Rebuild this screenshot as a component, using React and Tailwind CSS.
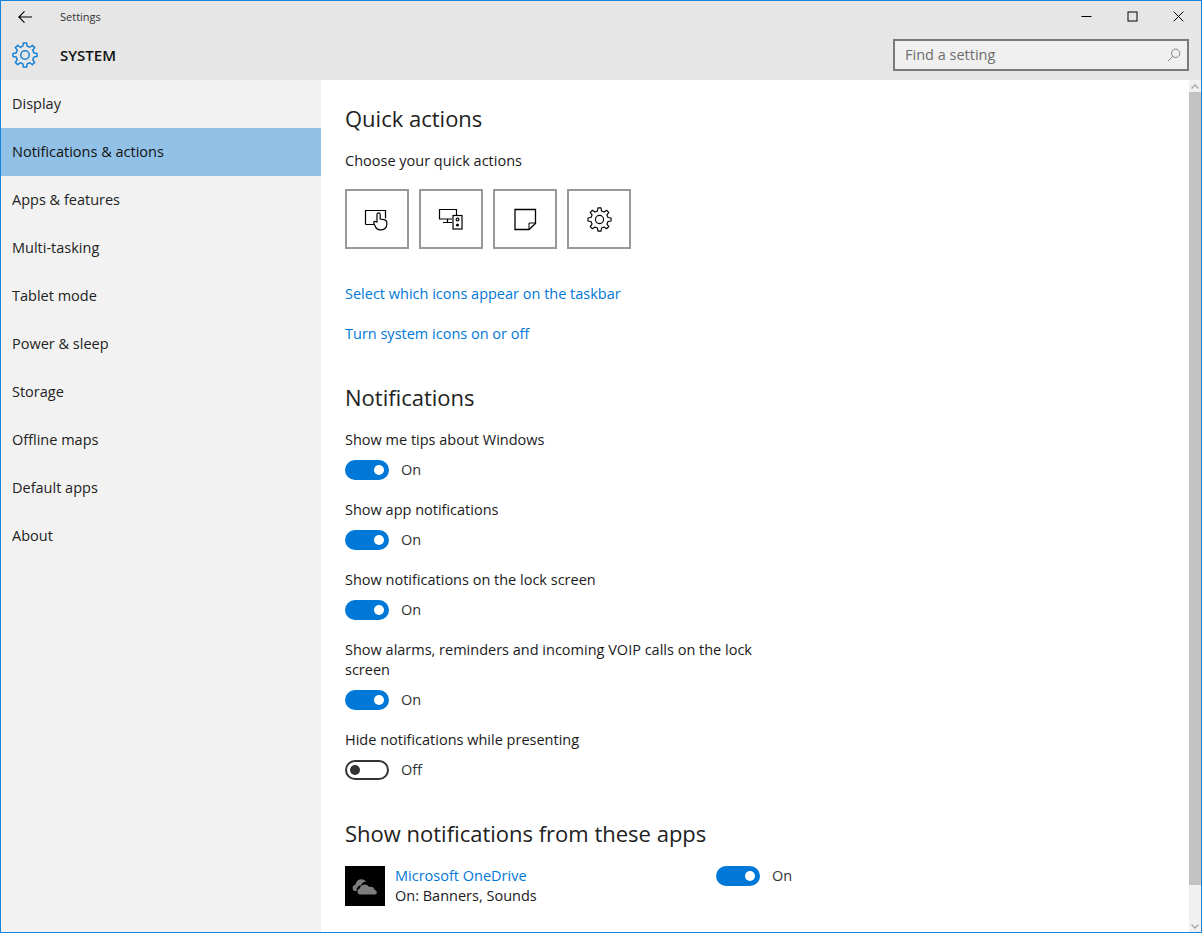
import React from "react";

const gearPath = (teeth, cx, cy, ro, ri) => {
  const pts = [];
  const step = (Math.PI * 2) / teeth;
  for (let i = 0; i < teeth; i++) {
    const a = i * step - Math.PI / 2;
    const p = (r, d) => `${(cx + r * Math.cos(a + d * step)).toFixed(2)} ${(cy + r * Math.sin(a + d * step)).toFixed(2)}`;
    pts.push(p(ro, -0.17), p(ro, 0.17), p(ri, 0.3), p(ri, 0.7));
  }
  return "M" + pts.join("L") + "Z";
};

function Gear({ className, size, strokeWidth = 1.4 }) {
  return (
    <svg width={size} height={size} viewBox="0 0 24 24" className={className} fill="none" stroke="currentColor" strokeWidth={strokeWidth} strokeLinejoin="round">
      <path d={gearPath(8, 12, 12, 11.2, 8.4)} />
      <circle cx="12" cy="12" r="3.9" />
    </svg>
  );
}

function Toggle({ on }) {
  return (
    <div className="flex items-center h-5">
      <div className={on ? "w-11 h-5 rounded-full bg-[#0078d7] flex items-center justify-end pr-[5px]" : "w-11 h-5 rounded-full border-2 border-[#333333] bg-white flex items-center pl-[3px]"}>
        <div className={on ? "w-2.5 h-2.5 rounded-full bg-white" : "w-2.5 h-2.5 rounded-full bg-[#333333]"} />
      </div>
      <span className="ml-3 text-[#333333]">{on ? "On" : "Off"}</span>
    </div>
  );
}

function Setting({ label, on, first }) {
  return (
    <div className={first ? "mt-[18px] w-[412px]" : "mt-5 w-[412px]"}>
      <div className="text-[#1a1a1a]">{label}</div>
      <div className="mt-2.5"><Toggle on={on} /></div>
    </div>
  );
}

function Tile({ children }) {
  return <div className="w-16 h-[60px] border-2 border-[#999999] flex items-center justify-center text-black">{children}</div>;
}

const nav = ["Display", "Notifications & actions", "Apps & features", "Multi-tasking", "Tablet mode", "Power & sleep", "Storage", "Offline maps", "Default apps", "About"];

export default function App() {
  return (
    <div className="w-[1202px] h-[933px] border border-[#1883d7] flex flex-col overflow-hidden bg-white text-[14.5px] leading-5 text-[#1a1a1a]" style={{ fontFamily: '"Open Sans", "Noto Sans", sans-serif' }}>
      <header className="h-[79px] shrink-0 bg-[#e6e6e6] flex flex-col">
        <div className="h-[31px] flex items-center relative">
          <svg width="16" height="16" viewBox="0 0 16 16" className="ml-4 text-black" fill="none" stroke="currentColor" strokeWidth="1.1">
            <path d="M15 8H2M7.5 2.3 1.8 8l5.7 5.7" />
          </svg>
          <span className="ml-[27px] text-[11px] text-[#333333]">Settings</span>
          <div className="ml-auto flex items-center text-black">
            <div className="w-[46px] flex justify-center"><svg width="11" height="11" viewBox="0 0 11 11"><path d="M0.5 5.5h10" stroke="currentColor" /></svg></div>
            <div className="w-[46px] flex justify-center"><svg width="11" height="11" viewBox="0 0 11 11"><rect x="1" y="1" width="9" height="9" fill="none" stroke="currentColor" /></svg></div>
            <div className="w-[46px] flex justify-center"><svg width="11" height="11" viewBox="0 0 11 11"><path d="M0.7 0.7l9.6 9.6M10.3 0.7l-9.6 9.6" stroke="currentColor" /></svg></div>
          </div>
        </div>
        <div className="flex-1 flex items-center pl-[11px] pr-3 pb-[2px]">
          <Gear size={26} className="text-[#1883d7]" />
          <span className="ml-[22px] text-[15px] font-semibold text-[#111111]">SYSTEM</span>
          <div className="ml-auto w-[296px] h-8 border-2 border-[#7a7a7a] bg-[#f0f0f0] flex items-center pl-2.5 pr-1.5 text-[#6e6e6e]">
            <span>Find a setting</span>
            <svg width="14" height="14" viewBox="0 0 14 14" className="ml-auto text-[#888888]" fill="none" stroke="currentColor" strokeWidth="1">
              <circle cx="8.7" cy="5.3" r="4.2" /><path d="M5.7 8.3 0.8 13.2" />
            </svg>
          </div>
        </div>
      </header>
      <div className="flex-1 flex min-h-0">
        <nav className="w-80 shrink-0 bg-[#f2f2f2]">
          {nav.map((n) => (
            <div key={n} className={n === "Notifications & actions" ? "h-12 pl-[11px] flex items-center bg-[#91c1e7] text-[#111111]" : "h-12 pl-[11px] flex items-center text-[#222222]"}>{n}</div>
          ))}
        </nav>
        <main className="flex-1 flex min-w-0">
          <div className="flex-1 pl-6 overflow-hidden">
            <h2 className="mt-[23px] text-[22px] leading-[30px] text-[#222222]">Quick actions</h2>
            <div className="mt-[18px]">Choose your quick actions</div>
            <div className="mt-[18px] flex gap-2.5">
              <Tile>
                <svg width="26" height="24" viewBox="0 0 26 24" fill="none" stroke="currentColor" strokeWidth="1.2">
                  <path d="M10 17.5H2.5a1 1 0 0 1-1-1V3.5h20v8" />
                  <path d="M13 15V7.5a1.6 1.6 0 0 1 3.2 0V12l3.6.6c1.6.3 3 1.2 3 3v2a5.2 5.2 0 0 1-5.200 5.200h-1.600a5 5 0 0 1-4.600-3l-1.600-3.800c-.6-1.400 1-2.200 2-1.200z" fill="white" />
                </svg>
              </Tile>
              <Tile>
                <svg width="26" height="24" viewBox="0 0 26 24" fill="none" stroke="currentColor" strokeWidth="1.2">
                  <path d="M14 12H1.500V2.500h17v6" />
                  <path d="M9.500 12v3M5 15.500h9" />
                  <rect x="15" y="8.500" width="9" height="13.500" />
                  <circle cx="19.500" cy="12.500" r="1.400" />
                  <circle cx="19.500" cy="18" r="0.900" fill="currentColor" />
                </svg>
              </Tile>
              <Tile>
                <svg width="24" height="24" viewBox="0 0 24 24" fill="none" stroke="currentColor" strokeWidth="1.300">
                  <path d="M2 2.500h20.500v14L16 22.500H2z" />
                  <path d="M22.500 16H16v6.500" strokeWidth="1" />
                </svg>
              </Tile>
              <Tile><Gear size={25} strokeWidth={1.1} /></Tile>
            </div>
            <div className="mt-[35px] text-[#0078d7]">Select which icons appear on the taskbar</div>
            <div className="mt-5 text-[#0078d7]">Turn system icons on or off</div>
            <h2 className="mt-[38px] text-[22px] leading-[30px] text-[#222222]">Notifications</h2>
            <Setting first label="Show me tips about Windows" on />
            <Setting label="Show app notifications" on />
            <Setting label="Show notifications on the lock screen" on />
            <Setting label="Show alarms, reminders and incoming VOIP calls on the lock screen" on />
            <Setting label="Hide notifications while presenting" on={false} />
            <h2 className="mt-[38px] text-[22px] leading-[30px] text-[#222222]">Show notifications from these apps</h2>
            <div className="mt-[18px] flex items-start">
              <div className="w-10 h-10 bg-black flex items-center justify-center">
                <svg width="26" height="20" viewBox="0 0 26 20" fill="#7d7d7d">
                  <path d="M2 15c-2.500-2-1.500-6 1.500-6.500C4.500 3 11 1.500 14 5.500c-3 .5-4.500 2-5 4-3 0-4.500 2-4.500 5.500z" />
                  <path d="M8 18.500c-3 0-3.500-5-.3-6 .4-3.500 6.300-6 9.300-1.500 3-1 5.500 .5 5.500 3 2.500 0 3.500 4.500 .5 4.500z" />
                </svg>
              </div>
              <div className="ml-2.5 w-[321px]">
                <div className="text-[#0078d7]">Microsoft OneDrive</div>
                <div>On: Banners, Sounds</div>
              </div>
              <Toggle on />
            </div>
          </div>
          <div className="w-3 shrink-0 bg-[#f0f0f0] flex flex-col">
            <div className="h-3 flex items-center justify-center text-[#a6a6a6]">
              <svg width="8" height="5" viewBox="0 0 8 5" fill="none" stroke="currentColor" strokeWidth="1.300"><path d="M0.500 4.500 4 1l3.500 3.500" /></svg>
            </div>
            <div className="h-[793px] bg-[#c2c2c2]" />
            <div className="mt-auto h-3 flex items-center justify-center text-[#a6a6a6]">
              <svg width="8" height="5" viewBox="0 0 8 5" fill="none" stroke="currentColor" strokeWidth="1.300"><path d="M0.500 0.500 4 4l3.500-3.500" /></svg>
            </div>
          </div>
        </main>
      </div>
    </div>
  );
}
